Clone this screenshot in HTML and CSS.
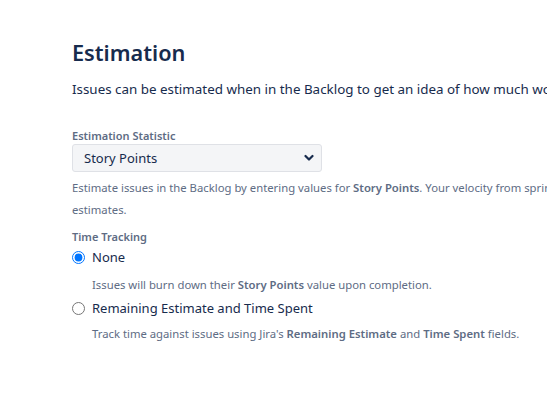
FILE: index.html
```html
<!DOCTYPE html>
<html>
<head>
<meta charset="utf-8">
<link rel="stylesheet" href="styles.css">
</head>
<body>
<div class="page">
  <h1 class="title">Estimation</h1>
  <p class="intro">Issues can be estimated when in the Backlog to get an idea of how much work is in each sprint.</p>
  <div class="stat-field">
    <label class="label">Estimation Statistic</label>
    <div class="select">
      <span>Story Points</span>
      <svg class="chev" width="10" height="8" viewBox="0 0 10 8"><path d="M1.5 2 L5 5.5 L8.5 2" fill="none" stroke="#172B4D" stroke-width="2.2" stroke-linecap="round" stroke-linejoin="round"/></svg>
    </div>
    <p class="help">Estimate issues in the Backlog by entering values for <b>Story Points</b>. Your velocity from sprint to sprint is calculated based on these estimates.</p>
  </div>
  <div class="time-field">
    <div class="label">Time Tracking</div>
    <label class="radio-row first">
      <input type="radio" name="tt" checked>
      <span class="radio-text">None</span>
    </label>
    <p class="radio-help">Issues will burn down their <b>Story Points</b> value upon completion.</p>
    <label class="radio-row">
      <input type="radio" name="tt">
      <span class="radio-text">Remaining Estimate and Time Spent</span>
    </label>
    <p class="radio-help last">Track time against issues using Jira's <b>Remaining Estimate</b> and <b>Time Spent</b> fields.</p>
  </div>
</div>
</body>
</html>
```
FILE: styles.css
```css
html, body { margin: 0; padding: 0; background: #fff; overflow: hidden; }
body { font-family: "Noto Sans", "Open Sans", sans-serif; color: #172B4D; }
.page { padding: 36px 0 0 72px; width: 760px; }
.title { margin: 0; font-size: 21.7px; font-weight: 600; line-height: 34px; color: #172B4D; }
.intro { margin: 9px 0 0; font-size: 13.4px; line-height: 20px; white-space: nowrap; }
.stat-field { margin-top: 29px; }
.time-field { margin-top: 9px; }
.label { display: block; font-size: 11px; font-weight: 600; color: #5E6C84; line-height: 16px; }
.select { width: 250px; height: 28px; box-sizing: border-box; border: 1px solid #DFE1E6; border-radius: 3px; background: #F4F5F7; display: flex; align-items: center; justify-content: space-between; padding: 0 7px 0 11px; font-size: 13px; color: #172B4D; }
.chev { display: block; }
.help { margin: 5px 0 0; font-size: 11.3px; line-height: 21.5px; color: #5E6C84; width: 700px; }
.help b, .radio-help b { font-weight: 600; }
.radio-row { display: flex; align-items: center; gap: 7px; margin-top: 3px; height: 20px; }
.radio-row.first { margin-top: 2px; }
.radio-row input { margin: 0; width: 13px; height: 13px; }
.radio-text { font-size: 13px; color: #172B4D; }
.radio-help { margin: 8px 0 0 20px; font-size: 11.3px; line-height: 20px; color: #5E6C84; white-space: nowrap; }
.radio-help.last { margin-top: 6px; }
```
